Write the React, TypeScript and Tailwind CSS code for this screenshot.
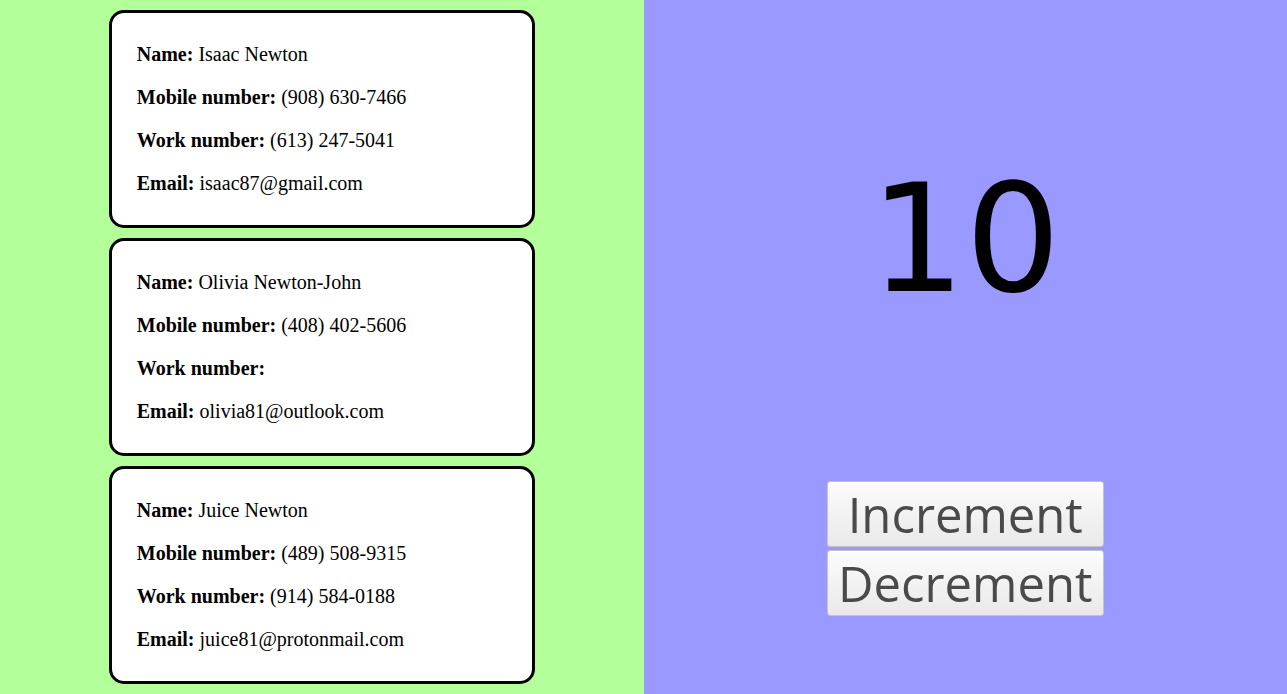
const contacts = [
  { name: "Isaac Newton", mobile: "(908) 630-7466", work: "(613) 247-5041", email: "isaac87@gmail.com" },
  { name: "Olivia Newton-John", mobile: "(408) 402-5606", work: "", email: "olivia81@outlook.com" },
  { name: "Juice Newton", mobile: "(489) 508-9315", work: "(914) 584-0188", email: "juice81@protonmail.com" },
];

function Contact({ c }: { c: (typeof contacts)[number] }) {
  return (
    <div className="w-[426px] h-[218px] mb-[10px] border-[3px] border-black rounded-[15px] bg-white px-[25px] py-[10px] flex flex-col gap-5 pt-[30px]">
      <p className="leading-[23px]"><b>Name:</b> {c.name}</p>
      <p className="leading-[23px]"><b>Mobile number:</b> {c.mobile}</p>
      <p className="leading-[23px]"><b>Work number:</b> {c.work}</p>
      <p className="leading-[23px]"><b>Email:</b> {c.email}</p>
    </div>
  );
}

export default function App() {
  return (
    <div className="flex w-full h-[694px] overflow-hidden">
      {/* Contacts */}
      <div className="w-1/2 bg-[#b3ff99] flex flex-col items-center pt-[10px] text-[20px] text-black font-['Liberation_Serif',serif]">
        {contacts.map((c) => (
          <Contact key={c.name} c={c} />
        ))}
      </div>

      {/* Counter */}
      <div className="w-1/2 bg-[#9999ff] flex flex-col items-center pt-[152px]">
        <div className="text-[150px] leading-[175px] text-black font-['DejaVu_Sans',sans-serif]">10</div>
        <div className="flex flex-col gap-[3px] mt-[154px]">
          {["Increment", "Decrement"].map((label) => (
            <button
              key={label}
              className="w-[277px] h-[66px] border border-[#c4c4c4] rounded-[3px] bg-gradient-to-b from-[#fcfcfc] to-[#e9e9e9] text-[#4a4a4a] text-[49px] leading-none font-['Open_Sans',sans-serif]"
            >
              {label}
            </button>
          ))}
        </div>
      </div>
    </div>
  );
}
